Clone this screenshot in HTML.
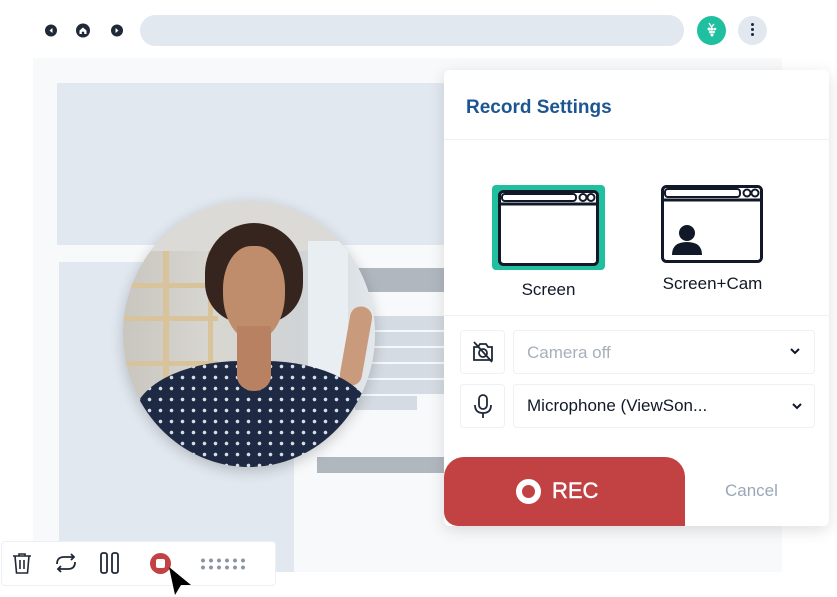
<!DOCTYPE html>
<html><head><meta charset="utf-8"><style>
*{margin:0;padding:0;box-sizing:border-box}
body{width:837px;height:597px;background:#fff;position:relative;overflow:hidden;font-family:"Liberation Sans",sans-serif}
.a{position:absolute}
</style></head><body>
<!-- nav -->
<svg class="a" style="left:44px;top:22px" width="85" height="17" viewBox="0 0 85 17">
<circle cx="7" cy="8.5" r="6" fill="#1f2937"/><path d="M8.5 6 L5.5 8.5 L8.5 11Z" fill="#fff"/>
<circle cx="39" cy="8.5" r="7" fill="#1f2937"/><path d="M35.5 12 V8.5 L39 5.5 L42.5 8.5 V12 H40.2 V9.8 H37.8 V12Z" fill="#fff"/>
<circle cx="73" cy="8.5" r="6" fill="#1f2937"/><path d="M71.5 6 L74.5 8.5 L71.5 11Z" fill="#fff"/>
</svg>
<div class="a" style="left:140px;top:15px;width:544px;height:31px;border-radius:16px;background:#e2e8f0"></div>
<div class="a" style="left:697px;top:16px;width:29px;height:29px;border-radius:50%;background:#1fbf9f"></div>
<svg class="a" style="left:703px;top:22px" width="17" height="17" viewBox="0 0 17 17" fill="#fff"><path d="M6 1 L8.5 5 L11 2" stroke="#fff" stroke-width="1.3" fill="none"/><circle cx="6" cy="7" r="1.5"/><circle cx="9" cy="7" r="1.5"/><circle cx="12" cy="7" r="1.3"/><circle cx="7.5" cy="10" r="1.5"/><circle cx="10.5" cy="10" r="1.4"/><circle cx="9" cy="13" r="1.5"/></svg>
<div class="a" style="left:738px;top:16px;width:29px;height:29px;border-radius:50%;background:#e2e8f0"></div>
<div class="a" style="left:751px;top:23px;width:3px;height:3px;border-radius:50%;background:#1f2937;box-shadow:0 5px 0 #1f2937,0 10px 0 #1f2937"></div>
<!-- page -->
<div class="a" style="left:33px;top:58px;width:749px;height:514px;background:#f7f9fb"></div>
<div class="a" style="left:57px;top:83px;width:400px;height:162px;background:#e2e8f0"></div>
<div class="a" style="left:59px;top:262px;width:235px;height:310px;background:#e2e8f0"></div>
<div class="a" style="left:358px;top:268px;width:90px;height:24px;background:#b1b7bf"></div>
<div class="a" style="left:360px;top:316px;width:88px;height:14px;background:#d5dbe3"></div>
<div class="a" style="left:360px;top:332px;width:88px;height:14px;background:#d5dbe3"></div>
<div class="a" style="left:360px;top:348px;width:88px;height:14px;background:#d5dbe3"></div>
<div class="a" style="left:360px;top:364px;width:88px;height:14px;background:#d5dbe3"></div>
<div class="a" style="left:360px;top:380px;width:88px;height:14px;background:#d5dbe3"></div>
<div class="a" style="left:355px;top:396px;width:62px;height:14px;background:#d5dbe3"></div>
<div class="a" style="left:317px;top:457px;width:131px;height:16px;background:#b1b7bf"></div>
<!-- photo -->
<div class="a" style="left:123px;top:201px;width:252px;height:266px;border-radius:50%;overflow:hidden;background:linear-gradient(90deg,#c9c6c0 0%,#d8d6d0 35%,#cfd3d6 70%,#e3e8ec 100%);box-shadow:0 4px 14px rgba(0,0,0,.2)">
 <div class="a" style="left:0;top:0;width:252px;height:50px;background:#dcdad6"></div>
 <div class="a" style="left:40px;top:50px;width:6px;height:150px;background:#d9c39a"></div>
 <div class="a" style="left:85px;top:50px;width:5px;height:150px;background:#d9c39a"></div>
 <div class="a" style="left:0;top:82px;width:95px;height:5px;background:#d9c39a"></div>
 <div class="a" style="left:0;top:115px;width:95px;height:5px;background:#d9c39a"></div>
 <div class="a" style="left:0;top:160px;width:95px;height:5px;background:#d9c39a"></div>
 <div class="a" style="left:185px;top:40px;width:40px;height:160px;background:#e8eef2"></div>
 <div class="a" style="left:82px;top:22px;width:98px;height:100px;border-radius:50% 50% 40% 40%;background:#35251e"></div>
 <div class="a" style="left:100px;top:45px;width:62px;height:95px;border-radius:45% 45% 50% 50%;background:#c08d6c"></div>
 <div class="a" style="left:114px;top:125px;width:34px;height:55px;background:#b88162"></div>
 <div class="a" style="left:222px;top:105px;width:22px;height:80px;border-radius:12px;background:#c99a7b;transform:rotate(10deg)"></div>
 <div class="a" style="left:10px;top:160px;width:240px;height:130px;border-radius:45% 45% 0 0;background:#1e2a44 radial-gradient(circle,#d9dde6 1.6px,transparent 2px) 0 0/11px 11px"></div>
 <div class="a" style="left:114px;top:160px;width:34px;height:30px;border-radius:0 0 50% 50%;background:#b88162"></div>
</div>
<!-- panel -->
<div class="a" style="left:444px;top:70px;width:385px;height:456px;background:#fff;border-radius:6px;box-shadow:0 4px 16px rgba(0,0,0,.13)"></div>
<div class="a" style="left:466px;top:97px;font-size:19px;font-weight:bold;color:#1c5591">Record Settings</div>
<div class="a" style="left:444px;top:139px;width:385px;height:1px;background:#eef1f5"></div>
<div class="a" style="left:492px;top:185px;width:113px;height:85px;border-radius:4px;background:#1fbf9f"></div>
<svg class="a" style="left:498px;top:190px" width="101" height="76" viewBox="0 0 101 76"><rect x="1.5" y="1.5" width="98" height="73" rx="4" fill="#fff" stroke="#111827" stroke-width="3"/><line x1="1.5" y1="14" x2="99.5" y2="14" stroke="#111827" stroke-width="3"/><rect x="4" y="4" width="74" height="7" rx="3" fill="#fff" stroke="#111827" stroke-width="2"/><circle cx="85" cy="7.5" r="3.5" fill="none" stroke="#111827" stroke-width="2"/><circle cx="93" cy="7.5" r="3.5" fill="none" stroke="#111827" stroke-width="2"/></svg>
<div class="a" style="left:492px;top:280px;width:113px;text-align:center;font-size:17px;color:#111827">Screen</div>
<svg class="a" style="left:661px;top:185px" width="102" height="78" viewBox="0 0 102 78"><rect x="1.5" y="1.5" width="99" height="75" rx="4" fill="#fff" stroke="#111827" stroke-width="3"/><line x1="1.5" y1="15" x2="100.5" y2="15" stroke="#111827" stroke-width="3"/><rect x="4" y="4" width="75" height="8" rx="3" fill="#fff" stroke="#111827" stroke-width="2"/><circle cx="86" cy="8" r="3.5" fill="none" stroke="#111827" stroke-width="2"/><circle cx="94" cy="8" r="3.5" fill="none" stroke="#111827" stroke-width="2"/><circle cx="26" cy="48" r="8" fill="#111827"/><path d="M11 70 Q11 57 26 57 Q41 57 41 70Z" fill="#111827"/></svg>
<div class="a" style="left:650px;top:274px;width:125px;text-align:center;font-size:17px;color:#111827">Screen+Cam</div>
<div class="a" style="left:444px;top:315px;width:385px;height:1px;background:#eef1f5"></div>
<div class="a" style="left:460px;top:330px;width:45px;height:44px;border:1px solid #edf0f4;border-radius:4px"></div>
<svg class="a" style="left:471px;top:340px" width="24" height="24" viewBox="0 0 24 24" fill="none" stroke="#1f2937" stroke-width="1.8"><path d="M3 7 H7 L9 4 H15 L17 7 H21 V20 H3Z"/><circle cx="12" cy="13" r="4"/><line x1="3" y1="2" x2="21" y2="22"/></svg>
<div class="a" style="left:513px;top:330px;width:302px;height:44px;border:1px solid #edf0f4;border-radius:4px"></div>
<div class="a" style="left:527px;top:343px;font-size:17px;color:#a8afbb">Camera off</div>
<svg class="a" style="left:789px;top:347px" width="12" height="8" viewBox="0 0 12 8"><path d="M2 2 L6 6 L10 2" fill="none" stroke="#111827" stroke-width="2"/></svg>
<div class="a" style="left:460px;top:384px;width:45px;height:44px;border:1px solid #edf0f4;border-radius:4px"></div>
<svg class="a" style="left:472px;top:393px" width="22" height="26" viewBox="0 0 22 26" fill="none" stroke="#1f2937" stroke-width="1.8"><rect x="7" y="2" width="8" height="14" rx="4"/><path d="M3 12 Q3 20 11 20 Q19 20 19 12"/><line x1="11" y1="20" x2="11" y2="25"/></svg>
<div class="a" style="left:513px;top:384px;width:302px;height:44px;border:1px solid #edf0f4;border-radius:4px"></div>
<div class="a" style="left:527px;top:396px;font-size:17px;color:#111827">Microphone (ViewSon...</div>
<svg class="a" style="left:791px;top:402px" width="12" height="8" viewBox="0 0 12 8"><path d="M2 2 L6 6 L10 2" fill="none" stroke="#111827" stroke-width="2"/></svg>
<div class="a" style="left:444px;top:457px;width:241px;height:69px;background:#c24142;border-radius:20px 20px 0 14px"></div>
<div class="a" style="left:516px;top:479px;width:25px;height:25px;border-radius:50%;border:6px solid #fff"></div>
<div class="a" style="left:552px;top:478px;font-size:22px;color:#fff;-webkit-text-stroke:0.4px #fff">REC</div>
<div class="a" style="left:725px;top:481px;font-size:17px;color:#9aa6ba">Cancel</div>
<!-- toolbar -->
<div class="a" style="left:1px;top:541px;width:275px;height:45px;background:#fff;border:1px solid #eceff3;border-radius:4px"></div>
<svg class="a" style="left:10px;top:551px" width="24" height="24" viewBox="0 0 24 24" fill="none" stroke="#1f2937" stroke-width="1.6"><path d="M3 5 H21 M9 5 V3 H15 V5 M5 5 L6.5 22 H17.5 L19 5 M10 9 V18 M14 9 V18"/></svg>
<svg class="a" style="left:53px;top:551px" width="26" height="24" viewBox="0 0 26 24" fill="none" stroke="#1f2937" stroke-width="1.8"><path d="M4 13 Q4 6 11 6 H21 M18 3 L21 6 L18 9 M22 11 Q22 18 15 18 H5 M8 15 L5 18 L8 21"/></svg>
<svg class="a" style="left:98px;top:551px" width="24" height="24" viewBox="0 0 24 24" fill="none" stroke="#1f2937" stroke-width="1.8"><rect x="3" y="2" width="6" height="20" rx="2"/><rect x="14" y="2" width="6" height="20" rx="2"/></svg>
<div class="a" style="left:150px;top:553px;width:21px;height:21px;border-radius:50%;background:#c24142"></div>
<div class="a" style="left:156px;top:559px;width:9px;height:9px;border-radius:2px;background:#fff"></div>
<svg class="a" style="left:167px;top:566px" width="26" height="30" viewBox="0 0 26 30"><path d="M2 1 L24 19 L14 19 L8 29Z" fill="#000"/></svg>
<div class="a" style="left:199px;top:557px;width:48px;height:14px;background:radial-gradient(circle,#8d96a3 1.8px,transparent 2.2px) 0 0/8px 7px"></div>
</body></html>
